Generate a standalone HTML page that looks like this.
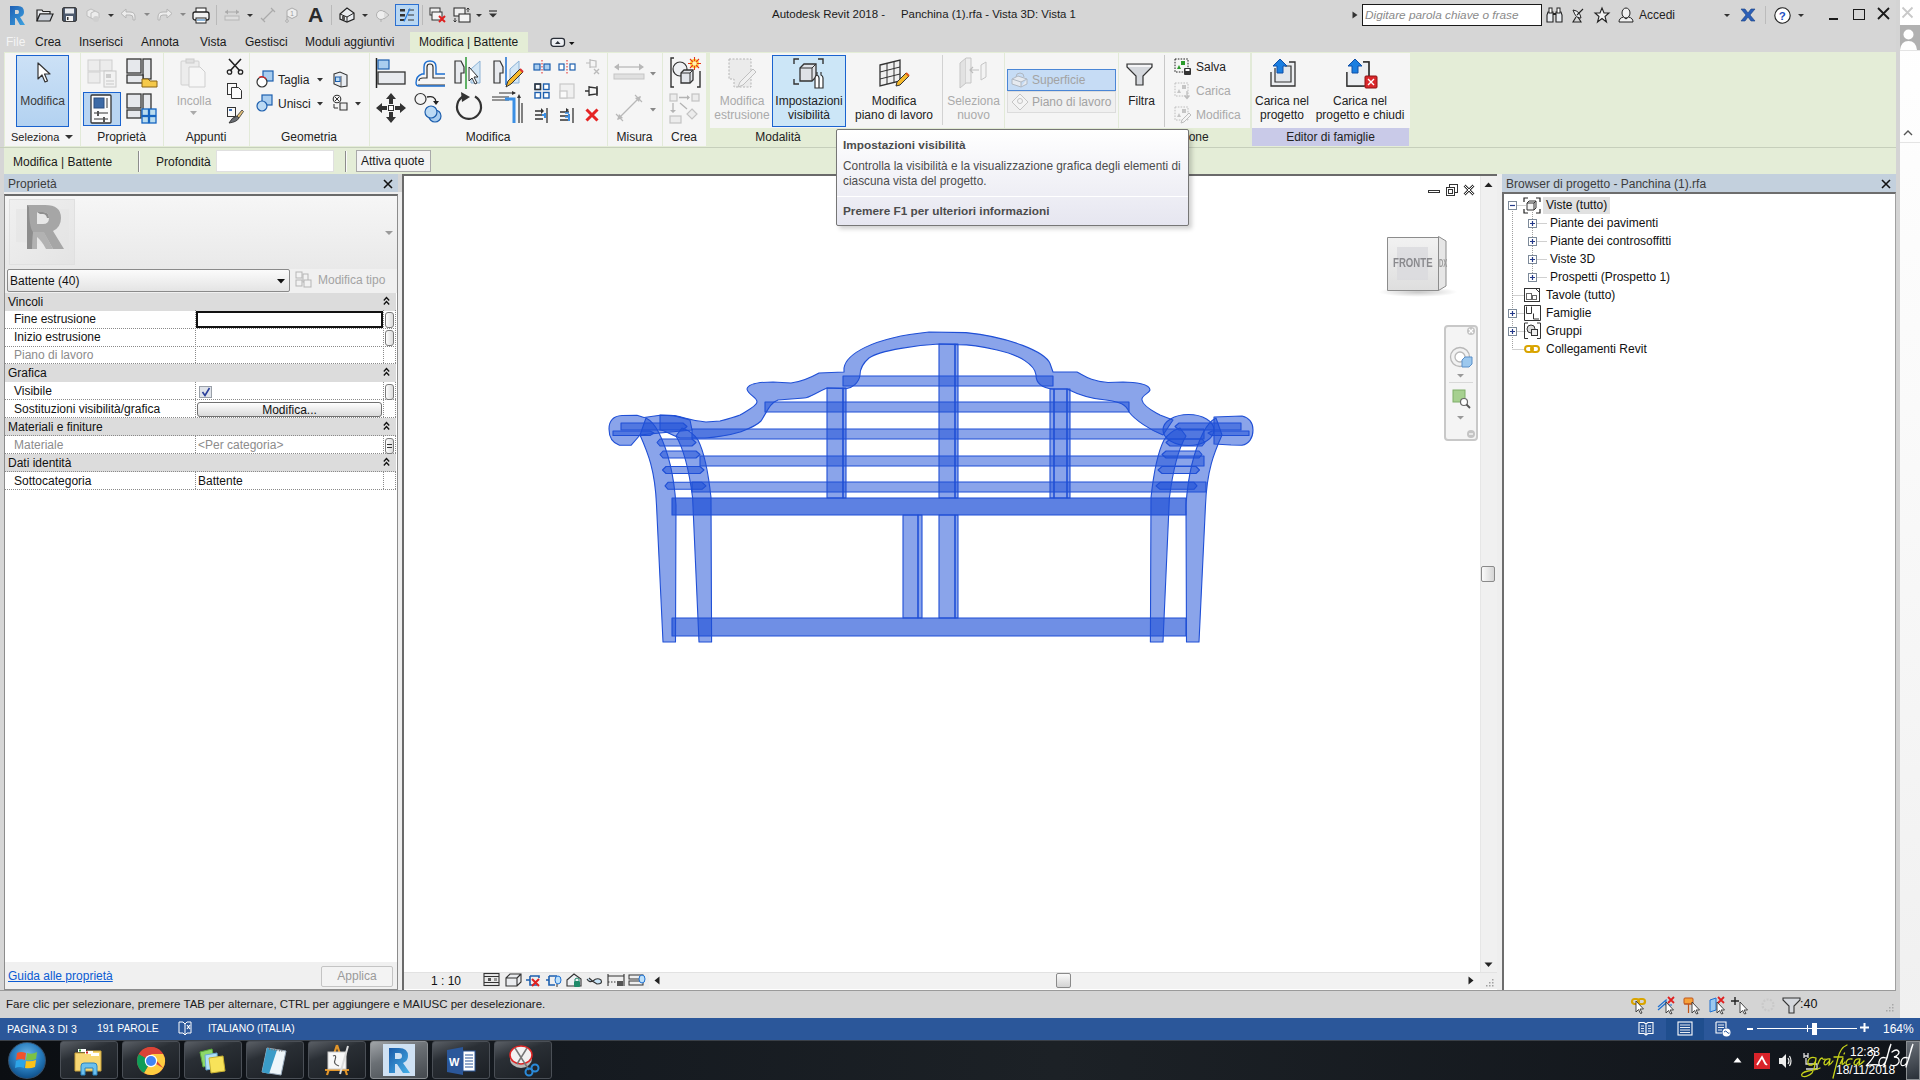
<!DOCTYPE html>
<html><head><meta charset="utf-8">
<style>
*{box-sizing:border-box}
html,body{margin:0;padding:0}
body{width:1920px;height:1080px;overflow:hidden;position:relative;font-family:"Liberation Sans",sans-serif;font-size:12px;color:#1a1a1a;background:#d6d6d6}
.a{position:absolute}
.t{position:absolute;white-space:nowrap;line-height:14px}
.g{color:#a8a8a8}
svg{position:absolute;overflow:visible}
</style></head><body>

<!-- ===== TOP BAR ===== -->
<div class="a" style="left:0;top:0;width:1896px;height:52px;background:#d6d6d6"></div>
<div class="a" style="left:1896px;top:0;width:4px;height:1080px;background:#d4d4d4"></div>
<div class="a" style="left:1900px;top:0;width:20px;height:1018px;background:linear-gradient(#ffffff,#fafafa 40%,#f0f0f0)"></div>

<div class="t" style="left:772px;top:7px;font-size:11.5px">Autodesk Revit 2018 -</div>
<div class="t" style="left:901px;top:7px;font-size:11.4px">Panchina (1).rfa - Vista 3D: Vista 1</div>

<!-- QAT -->
<svg style="left:9px;top:5px" width="18" height="21" viewBox="0 0 18 21"><defs><linearGradient id="rg" x1="0" y1="0" x2="1" y2="1"><stop offset="0" stop-color="#1e5fb4"/><stop offset="1" stop-color="#3fa3e0"/></linearGradient></defs><path d="M1 1 H9 Q15 1 15 7 Q15 11 11 12 L16 20 H11 L7 13 H6 V20 H1 Z M6 5 V9 H8.5 Q10 9 10 7 Q10 5 8.5 5 Z" fill="url(#rg)"/></svg>
<svg style="left:36px;top:8px" width="18" height="14" viewBox="0 0 18 14"><path d="M1 2 H6 L7 3.5 H14 V6 H4 L1 13 Z" fill="#e8eaee" stroke="#222" stroke-width="1.2"/><path d="M1 13 L4 6 H17 L14 13 Z" fill="#c9ced6" stroke="#222" stroke-width="1.2"/></svg>
<svg style="left:62px;top:7px" width="15" height="15" viewBox="0 0 15 15"><rect x="0.7" y="0.7" width="13.6" height="13.6" rx="1" fill="#4d5a6e" stroke="#222"/><rect x="3" y="1.5" width="9" height="5" fill="#e8eaee"/><rect x="4" y="9" width="7" height="5" fill="#f3f3f3"/><rect x="5" y="10" width="1.5" height="3" fill="#333"/></svg>
<svg style="left:85px;top:7px" width="16" height="16" viewBox="0 0 16 16"><g fill="#ececec" stroke="#bdbdbd"><path d="M2 4 L6 2 L10 4 V9 L6 11 L2 9Z"/><path d="M6 6 L10 4 L14 6 V11 L10 13 L6 11Z"/></g><circle cx="11" cy="12" r="3" fill="#cfcfcf"/></svg>
<svg style="left:108px;top:14px" width="6" height="3"><path d="M0 0 H6 L3 3Z" fill="#333"/></svg>
<svg style="left:120px;top:8px" width="16" height="13" viewBox="0 0 16 13"><path d="M6 1 L1 5.5 L6 10 V7 H10 Q13 7 13 10 V12 H15 V9 Q15 4 10 4 H6 Z" fill="#ececec" stroke="#b5b5b5"/></svg>
<svg style="left:144px;top:13px" width="6" height="3"><path d="M0 0 H6 L3 3Z" fill="#888"/></svg>
<svg style="left:157px;top:8px" width="16" height="13" viewBox="0 0 16 13"><path d="M10 1 L15 5.5 L10 10 V7 H6 Q3 7 3 10 V12 H1 V9 Q1 4 6 4 H10 Z" fill="#ececec" stroke="#b5b5b5"/></svg>
<svg style="left:180px;top:13px" width="6" height="3"><path d="M0 0 H6 L3 3Z" fill="#888"/></svg>
<svg style="left:192px;top:7px" width="18" height="17" viewBox="0 0 18 17"><rect x="4" y="1" width="10" height="5" fill="#fff" stroke="#222"/><rect x="1" y="5" width="16" height="8" rx="2" fill="#f2f2f2" stroke="#222" stroke-width="1.3"/><rect x="4" y="11" width="10" height="5" fill="#fff" stroke="#222"/><rect x="5" y="12" width="8" height="2" fill="#8fb7da"/></svg>
<div class="a" style="left:216px;top:5px;width:1px;height:20px;background:#b9b9b9"></div>
<svg style="left:224px;top:8px" width="16" height="13" viewBox="0 0 16 13"><path d="M1 4 H15" stroke="#aaa"/><path d="M1 4 L4 1.5 V6.5Z M15 4 L12 1.5 V6.5Z" fill="#aaa"/><rect x="1" y="8" width="14" height="4" fill="#ddd" stroke="#b5b5b5"/></svg>
<svg style="left:247px;top:14px" width="6" height="3"><path d="M0 0 H6 L3 3Z" fill="#333"/></svg>
<svg style="left:260px;top:7px" width="16" height="16" viewBox="0 0 16 16"><path d="M3 13 L13 3 M1 11 L5 15 M11 1 L15 5" stroke="#aaa" stroke-width="1.2"/></svg>
<svg style="left:284px;top:7px" width="15" height="15" viewBox="0 0 15 15"><path d="M8 1 L13 3.5 V9 L8 11.5 L3 9 V3.5Z" fill="#eee" stroke="#aaa"/><path d="M3 9 V14" stroke="#aaa"/><circle cx="3" cy="14" r="1.3" fill="#eee" stroke="#aaa"/><text x="6.3" y="9" font-size="6.5" fill="#999" font-family="Liberation Sans">1</text></svg>
<div class="t" style="left:308px;top:4px;font-size:21px;line-height:22px;font-weight:bold;color:#2a2a2a">A</div>
<div class="a" style="left:331px;top:5px;width:1px;height:20px;background:#b9b9b9"></div>
<svg style="left:339px;top:7px" width="16" height="16" viewBox="0 0 16 16"><path d="M1 7 L8 1 L15 6 V12 L8 15 L1 12 Z" fill="#e9ecf0" stroke="#222" stroke-width="1.2"/><path d="M1 7 L8 10 L15 6 M8 10 V15" fill="none" stroke="#222"/><rect x="3" y="9" width="3" height="4" fill="#555"/></svg>
<svg style="left:362px;top:14px" width="6" height="3"><path d="M0 0 H6 L3 3Z" fill="#333"/></svg>
<svg style="left:375px;top:8px" width="15" height="14" viewBox="0 0 15 14"><circle cx="6" cy="7" r="4.5" fill="#eee" stroke="#b0b0b0"/><path d="M9 3 L14 7 L9 11" fill="#ddd" stroke="#b0b0b0"/><path d="M6 11.5 V14" stroke="#b0b0b0"/></svg>
<div class="a" style="left:395px;top:4px;width:24px;height:22px;background:#b8d7f3;border:1px solid #2b6fd0"></div>
<svg style="left:399px;top:8px" width="16" height="14" viewBox="0 0 16 14"><rect x="1" y="1" width="5" height="2.5" fill="#333"/><rect x="1" y="6" width="5" height="2.5" fill="#333"/><rect x="1" y="11" width="5" height="2" fill="#333"/><path d="M9 2 H15 M9 7 H15 M9 12 H15" stroke="#333" stroke-width="1"/><path d="M5 13.5 L11 0.5" stroke="#2b7fe0" stroke-width="1.3"/></svg>
<div class="a" style="left:422px;top:5px;width:1px;height:20px;background:#b9b9b9"></div>
<svg style="left:429px;top:7px" width="17" height="16" viewBox="0 0 17 16"><rect x="1" y="1" width="10" height="7" fill="#f0f0f0" stroke="#333"/><rect x="3" y="5" width="10" height="8" fill="#f4f4f4" stroke="#333"/><path d="M10 9 L16 15 M16 9 L10 15" stroke="#e02020" stroke-width="2"/></svg>
<svg style="left:453px;top:7px" width="18" height="16" viewBox="0 0 18 16"><rect x="1" y="1" width="11" height="8" fill="#f0f0f0" stroke="#333" stroke-width="1.1"/><rect x="6" y="7" width="11" height="8" fill="#f4f4f4" stroke="#333" stroke-width="1.1"/><path d="M15 1 V5 M13.5 2.5 L15 1 L16.5 2.5 M2 11 V15 M0.5 13.5 L2 15 L3.5 13.5" fill="none" stroke="#333"/></svg>
<svg style="left:476px;top:14px" width="6" height="3"><path d="M0 0 H6 L3 3Z" fill="#333"/></svg>
<svg style="left:488px;top:10px" width="10" height="8" viewBox="0 0 10 8"><path d="M1 1 H9" stroke="#333" stroke-width="1.2"/><path d="M1 3.5 H9 L5 7.5Z" fill="#333"/></svg>

<!-- title right -->
<svg style="left:1352px;top:11px" width="6" height="8"><path d="M0.5 0.5 L5.5 4 L0.5 7.5Z" fill="#333"/></svg>
<div class="a" style="left:1362px;top:4px;width:180px;height:22px;background:#fff;border:1px solid #1a1a1a"></div>
<div class="t" style="left:1365px;top:8px;color:#8a8a8a;font-style:italic;font-size:11.8px">Digitare parola chiave o frase</div>
<svg style="left:1546px;top:7px" width="17" height="16" viewBox="0 0 17 16"><path d="M2 5 H7 V15 H1 V8 Z M10 5 H15 L16 8 V15 H10 Z" fill="#e9ecf0" stroke="#222" stroke-width="1.1"/><rect x="3" y="1" width="3" height="5" fill="#fff" stroke="#222"/><rect x="11" y="1" width="3" height="5" fill="#fff" stroke="#222"/><path d="M7 7 H10" stroke="#222" stroke-width="2"/></svg>
<svg style="left:1570px;top:7px" width="15" height="16" viewBox="0 0 15 16"><path d="M3 3 Q10 4 11 11 Q6 12 3 3Z" fill="#eef0f3" stroke="#222"/><path d="M7 8 L13 2 M6 10 L3 15 H11 L8 10" fill="none" stroke="#222" stroke-width="1.1"/></svg>
<svg style="left:1594px;top:7px" width="16" height="16" viewBox="0 0 16 16"><path d="M8 1 L10 6 H15 L11 9.5 L12.5 15 L8 11.5 L3.5 15 L5 9.5 L1 6 H6 Z" fill="#f2f2f2" stroke="#222" stroke-width="1.1"/></svg>
<svg style="left:1618px;top:7px" width="16" height="16" viewBox="0 0 16 16"><ellipse cx="8" cy="6" rx="4" ry="5" fill="#f2f2f2" stroke="#222"/><path d="M1 15 Q1 11 5.5 10 L8 12 L10.5 10 Q15 11 15 15 Z" fill="#f2f2f2" stroke="#222"/></svg>
<div class="t" style="left:1639px;top:8px;color:#222">Accedi</div>
<svg style="left:1724px;top:14px" width="6" height="3"><path d="M0 0 H6 L3 3Z" fill="#333"/></svg>
<svg style="left:1740px;top:8px" width="16" height="14" viewBox="0 0 16 14"><path d="M1 1 H5 L8 5 L11 1 H15 L10 7 L15 13 H11 L8 9 L5 13 H1 L6 7 Z" fill="#2c5fb8" stroke="#1a3f80" stroke-width="0.6"/></svg>
<div class="a" style="left:1765px;top:6px;width:1px;height:18px;background:#bbb"></div>
<svg style="left:1774px;top:7px" width="17" height="17" viewBox="0 0 17 17"><circle cx="8.5" cy="8.5" r="7.7" fill="#fff" stroke="#222" stroke-width="1.1"/><text x="4.8" y="13" font-size="11.5" font-weight="bold" fill="#1c4fc4" font-family="Liberation Sans">?</text></svg>
<svg style="left:1798px;top:14px" width="6" height="3"><path d="M0 0 H6 L3 3Z" fill="#333"/></svg>
<div class="a" style="left:1829px;top:18px;width:9px;height:2px;background:#1a1a1a"></div>
<div class="a" style="left:1853px;top:9px;width:12px;height:11px;border:1.5px solid #1a1a1a"></div>
<svg style="left:1877px;top:7px" width="13" height="13" viewBox="0 0 13 13"><path d="M1 1 L12 12 M12 1 L1 12" stroke="#1a1a1a" stroke-width="1.8"/></svg>
<svg style="left:1901px;top:6px" width="13" height="13" viewBox="0 0 13 13"><path d="M1.5 1.5 L11.5 11.5 M11.5 1.5 L1.5 11.5" stroke="#c9c9c9" stroke-width="1.8"/></svg>
<div class="a" style="left:1900px;top:25px;width:20px;height:25px;background:#b1b1b1"></div>
<svg style="left:1900px;top:27px" width="20" height="23" viewBox="0 0 20 23"><circle cx="8.5" cy="7.5" r="5" fill="#fff"/><path d="M0 23 Q1 14 8.5 14 Q16 14 17 23 Z" fill="#fff"/></svg>
<div class="a" style="left:1900px;top:50px;width:20px;height:1px;background:#e4e4e4"></div>
<svg style="left:1903px;top:130px" width="10" height="6"><path d="M1 5 L5 1 L9 5" fill="none" stroke="#555" stroke-width="1.4"/></svg>
<div class="a" style="left:1900px;top:142px;width:20px;height:1px;background:#e4e4e4"></div>

<!-- tabs -->
<div class="a" style="left:410px;top:32px;width:118px;height:20px;background:#e4edd6"></div>
<div class="t" style="left:6px;top:35px;color:#f4f4f4;font-size:12px">File</div>
<div class="t" style="left:35px;top:35px;font-size:12px">Crea</div>
<div class="t" style="left:79px;top:35px;font-size:12px">Inserisci</div>
<div class="t" style="left:141px;top:35px;font-size:12px">Annota</div>
<div class="t" style="left:200px;top:35px;font-size:12px">Vista</div>
<div class="t" style="left:245px;top:35px;font-size:12px">Gestisci</div>
<div class="t" style="left:305px;top:35px;font-size:12px">Moduli aggiuntivi</div>
<div class="t" style="left:419px;top:35px;font-size:12px">Modifica | Battente</div>
<svg style="left:550px;top:37px" width="26" height="11" viewBox="0 0 26 11"><rect x="1" y="1.3" width="13.5" height="8" rx="2.5" fill="#eef0f4" stroke="#2a2f38" stroke-width="1.3"/><path d="M5 7 L7.7 4 L10.5 7Z" fill="#2a2f38"/><path d="M19 5 H24.5 L21.75 8Z" fill="#111"/></svg>

<!-- ===== RIBBON ===== -->
<div class="a" style="left:4px;top:52px;width:1892px;height:96px;background:#e4edd7"></div>
<div class="a" style="left:5px;top:53px;width:701px;height:93px;background:#f5f5f5"></div>
<div class="a" style="left:710px;top:53px;width:700px;height:75px;background:#f5f5f5"></div>
<div class="a" style="left:710px;top:128px;width:540px;height:18px;background:#e4edd6"></div>
<div class="a" style="left:1252px;top:128px;width:157px;height:18px;background:#c9cae8"></div>
<div class="a" style="left:0;top:147px;width:1896px;height:1px;background:#c6cfbb"></div>
<!-- separators -->
<div class="a" style="left:80px;top:53px;width:1px;height:93px;background:#e2ead8"></div>
<div class="a" style="left:163px;top:53px;width:1px;height:93px;background:#e2ead8"></div>
<div class="a" style="left:249px;top:53px;width:1px;height:93px;background:#e2ead8"></div>
<div class="a" style="left:369px;top:53px;width:1px;height:93px;background:#e2ead8"></div>
<div class="a" style="left:607px;top:53px;width:1px;height:93px;background:#e2ead8"></div>
<div class="a" style="left:662px;top:53px;width:1px;height:93px;background:#e2ead8"></div>
<div class="a" style="left:1004px;top:53px;width:1px;height:93px;background:#e2ead8"></div>
<div class="a" style="left:1118px;top:53px;width:1px;height:93px;background:#e2ead8"></div>
<div class="a" style="left:1250px;top:53px;width:2px;height:93px;background:#e2ead8"></div>
<div class="a" style="left:942px;top:55px;width:1px;height:70px;background:#d2d2d2"></div>
<div class="a" style="left:1164px;top:55px;width:1px;height:72px;background:#c8c8c8"></div>

<!-- Seleziona panel -->
<div class="a" style="left:16px;top:55px;width:53px;height:72px;background:linear-gradient(#cce1f6,#b3d2f1);border:1px solid #1a63cf"></div>
<svg style="left:36px;top:62px" width="16" height="22" viewBox="0 0 16 22"><path d="M2 1 L2 17 L6 13 L9 20 L11.5 19 L8.5 12 L14 12 Z" fill="#fff" stroke="#333" stroke-width="1.2" stroke-linejoin="round"/></svg>
<div class="t" style="left:16px;top:94px;width:53px;text-align:center;color:#3a3a3a">Modifica</div>
<div class="t" style="left:11px;top:130px;color:#222;font-size:11px">Seleziona</div>
<svg style="left:65px;top:135px" width="8" height="5"><path d="M0 0 L8 0 L4 4 Z" fill="#333"/></svg>

<!-- Proprieta panel -->
<svg style="left:87px;top:58px" width="30" height="30" viewBox="0 0 30 30"><g fill="#ececec" stroke="#cfcfcf"><rect x="1" y="2" width="12" height="11"/><rect x="13" y="2" width="12" height="11"/><rect x="1" y="14" width="12" height="11"/></g><rect x="17" y="13" width="12" height="16" fill="#f2f2f2" stroke="#c8c8c8"/><rect x="19" y="16" width="5" height="4" fill="#ccc"/><path d="M19 23h8M19 26h8" stroke="#c8c8c8"/></svg>
<svg style="left:126px;top:57px" width="32" height="31" viewBox="0 0 32 31"><g fill="#e6e8ec" stroke="#333" stroke-width="1.3"><rect x="1" y="2" width="14" height="14"/><rect x="17" y="2" width="8" height="20"/><rect x="1" y="18" width="16" height="8"/></g><path d="M16 22 h6 l2 2 h7 v6 h-15 z" fill="#f5c94a" stroke="#8a6414"/></svg>
<div class="a" style="left:83px;top:92px;width:38px;height:34px;background:#b9d5f2;border:1px solid #1a63cf"></div>
<svg style="left:90px;top:94px" width="22" height="30" viewBox="0 0 22 30"><rect x="1" y="1" width="20" height="28" rx="1" fill="#fbfbfb" stroke="#333" stroke-width="1.3"/><rect x="4" y="4" width="10" height="10" fill="#3c6aa6" stroke="#2a4f80"/><rect x="16" y="4" width="2" height="10" fill="#999"/><path d="M4 19h14M4 25h14" stroke="#333" stroke-width="1.2"/><rect x="7" y="17" width="2" height="5" fill="#555"/><rect x="13" y="23" width="2" height="5" fill="#555"/></svg>
<svg style="left:126px;top:93px" width="32" height="31" viewBox="0 0 32 31"><g fill="#e6e8ec" stroke="#333" stroke-width="1.3"><rect x="1" y="1" width="14" height="14"/><rect x="17" y="1" width="8" height="16"/><rect x="1" y="17" width="14" height="8"/></g><g fill="#b9dcef" stroke="#1565c0" stroke-width="1.3"><rect x="16" y="16" width="6.5" height="6.5"/><rect x="23.5" y="16" width="6.5" height="6.5"/><rect x="16" y="23.5" width="6.5" height="6.5"/><rect x="23.5" y="23.5" width="6.5" height="6.5"/></g></svg>
<div class="t" style="left:80px;top:130px;width:83px;text-align:center;color:#222">Proprietà</div>

<!-- Appunti panel -->
<svg style="left:180px;top:58px" width="28" height="30" viewBox="0 0 28 30"><rect x="1" y="3" width="18" height="24" rx="1" fill="#ececec" stroke="#d0d0d0"/><rect x="6" y="1" width="8" height="4" fill="#e0e0e0" stroke="#ccc"/><path d="M9 9 h11 l5 5 v15 h-16 z" fill="#f6f6f6" stroke="#cfcfcf"/></svg>
<div class="t" style="left:163px;top:94px;width:62px;text-align:center;color:#aaa">Incolla</div>
<svg style="left:190px;top:111px" width="7" height="4"><path d="M0 0 L7 0 L3.5 4 Z" fill="#aaa"/></svg>
<svg style="left:226px;top:58px" width="18" height="17" viewBox="0 0 18 17"><path d="M3 1 L14 13 M15 1 L4 13" stroke="#222" stroke-width="1.6"/><circle cx="3.5" cy="14" r="2.2" fill="none" stroke="#222" stroke-width="1.3"/><circle cx="14.5" cy="14" r="2.2" fill="none" stroke="#222" stroke-width="1.3"/></svg>
<svg style="left:226px;top:82px" width="18" height="18" viewBox="0 0 18 18"><rect x="1.5" y="1.5" width="9" height="11" fill="#fafafa" stroke="#333"/><path d="M5.5 5.5 h7 l3 3 v8 h-10 z" fill="#fafafa" stroke="#333"/></svg>
<svg style="left:226px;top:106px" width="18" height="18" viewBox="0 0 18 18"><rect x="1.5" y="1.5" width="8" height="9" fill="#fafafa" stroke="#333"/><rect x="3" y="3" width="3" height="2" fill="#3b6fb6"/><path d="M3 17 Q6 11 11 10 L13 12 Q11 16 3 17Z" fill="#6a6e74" stroke="#333" stroke-width="0.9"/><path d="M11 10 L16 4 L17.5 5.5 L13 12Z" fill="#e6c27a" stroke="#333" stroke-width="0.8"/></svg>
<div class="t" style="left:163px;top:130px;width:86px;text-align:center;color:#222">Appunti</div>

<!-- Geometria panel -->
<svg style="left:256px;top:70px" width="18" height="18" viewBox="0 0 18 18"><rect x="7" y="1" width="10" height="10" fill="#a9cdef" stroke="#1d5fae" stroke-width="1.2"/><circle cx="6" cy="12" r="5" fill="#fff" stroke="#333" stroke-width="1.2"/><path d="M3 7.5 A5 5 0 0 1 10 9" stroke="#e02020" stroke-width="1.2" fill="none"/></svg>
<div class="t" style="left:278px;top:73px;color:#222">Taglia</div>
<svg style="left:317px;top:78px" width="6" height="4"><path d="M0 0 L6 0 L3 3.5 Z" fill="#333"/></svg>
<svg style="left:256px;top:94px" width="18" height="18" viewBox="0 0 18 18"><rect x="6" y="1" width="10" height="10" fill="#a9cdef" stroke="#1d5fae" stroke-width="1.2"/><circle cx="6" cy="12" r="5" fill="#bcdaf4" stroke="#1d5fae" stroke-width="1.2"/></svg>
<div class="t" style="left:278px;top:97px;color:#222">Unisci</div>
<svg style="left:317px;top:102px" width="6" height="4"><path d="M0 0 L6 0 L3 3.5 Z" fill="#333"/></svg>
<svg style="left:332px;top:71px" width="17" height="17" viewBox="0 0 17 17"><path d="M2 3 L8 1 L15 4 L15 15 L9 16 L2 13 Z" fill="#e9edf2" stroke="#333" stroke-width="1.1"/><path d="M9 5 V16" stroke="#333" stroke-width="0.8"/><rect x="3.5" y="6" width="4.5" height="4.5" fill="#bcdcf5" stroke="#1d5fae"/></svg>
<svg style="left:332px;top:94px" width="17" height="17" viewBox="0 0 17 17"><circle cx="5" cy="5" r="3.8" fill="none" stroke="#333" stroke-width="1.1"/><path d="M3 3l4 4M7 3l-4 4" stroke="#333"/><path d="M8 9 h7 v7 h-7 z" fill="#eee" stroke="#333" stroke-width="1.1"/><path d="M2 10 v4 h4" fill="none" stroke="#333"/></svg>
<svg style="left:355px;top:102px" width="6" height="4"><path d="M0 0 L6 0 L3 3.5 Z" fill="#333"/></svg>
<div class="t" style="left:249px;top:130px;width:120px;text-align:center;color:#222">Geometria</div>

<!-- Modifica panel -->
<svg style="left:375px;top:57px" width="32" height="32" viewBox="0 0 32 32"><path d="M1.5 1 V31" stroke="#222" stroke-width="1.5"/><rect x="3" y="3" width="11" height="9" fill="#a9cdef" stroke="#1d5fae" stroke-width="1.2"/><rect x="3" y="15" width="27" height="12" fill="#e8eaee" stroke="#333" stroke-width="1.3"/></svg>
<svg style="left:414px;top:59px" width="32" height="28" viewBox="0 0 32 28"><path d="M2 24 Q2 17 8 15 L10 15 L10 8 Q10 2 16 2 Q22 2 22 8 L22 15 L31 15" fill="none" stroke="#1d6fd0" stroke-width="1.4"/><path d="M4 26 L31 26 M5 22 Q5 19 9 19 L13 19 L13 8 Q13 5 16 5 Q19 5 19 8 L19 19 L31 19" fill="none" stroke="#333" stroke-width="1.2"/><path d="M2 24 Q2 27 5 27 L31 27" fill="none" stroke="#1d6fd0" stroke-width="1.3"/></svg>
<svg style="left:453px;top:57px" width="34" height="34" viewBox="0 0 34 34"><path d="M2 4 L8 4 L11 10 L11 16 L8 16 L8 26 L2 26 Z" fill="#e8eaee" stroke="#333" stroke-width="1.2"/><path d="M18 12 L27 4 L27 26 L18 26 Z" fill="#d3e6f5" stroke="#8bb2d6" stroke-width="1"/><path d="M13 0 V32" stroke="#2c9a35" stroke-width="1.5"/><path d="M16 10 L16 24 L19 21 L22 27 L24 26 L21 20 L25 20 Z" fill="#fff" stroke="#333"/></svg>
<svg style="left:492px;top:57px" width="32" height="32" viewBox="0 0 32 32"><path d="M2 4 L8 4 L11 10 L11 16 L8 16 L8 26 L2 26 Z" fill="#e8eaee" stroke="#333" stroke-width="1.2"/><path d="M18 12 L27 4 L27 26 L18 26 Z" fill="#d3e6f5" stroke="#8bb2d6" stroke-width="1"/><path d="M14 0 V28" stroke="#1d6fd0" stroke-width="1.5"/><path d="M14 30 L16 24 L28 12 L31 15 L19 27 Z" fill="#f5b92c" stroke="#333" stroke-width="1"/><path d="M28 12 L31 15" stroke="#d33" stroke-width="2"/></svg>
<svg style="left:375px;top:92px" width="32" height="32" viewBox="0 0 32 32"><path d="M16 1 L21 7 L18 7 L18 12 L14 12 L14 7 L11 7 Z M16 31 L21 25 L18 25 L18 20 L14 20 L14 25 L11 25 Z M1 16 L7 11 L7 14 L12 14 L12 18 L7 18 L7 21 Z M31 16 L25 11 L25 14 L20 14 L20 18 L25 18 L25 21 Z" fill="#333"/><rect x="13.5" y="13.5" width="5" height="5" fill="#fff" stroke="#333"/></svg>
<svg style="left:414px;top:92px" width="30" height="32" viewBox="0 0 30 32"><circle cx="6.5" cy="7" r="5.5" fill="#f3f3f3" stroke="#333" stroke-width="1.2"/><path d="M13 5 Q21 3 22 10" fill="none" stroke="#222" stroke-width="1.3"/><path d="M19 9 L22 13 L25 9 Z" fill="#222"/><circle cx="21" cy="24" r="6" fill="#a9cdef" stroke="#1d5fae" stroke-width="1.2"/><circle cx="17" cy="20" r="6" fill="#bcdaf4" stroke="#1d5fae" stroke-width="1.2"/></svg>
<svg style="left:453px;top:92px" width="32" height="32" viewBox="0 0 32 32"><path d="M11 4 A12 12 0 1 0 22 4.5" fill="none" stroke="#333" stroke-width="2.2"/><path d="M8 0 L17 5 L9 10 Z" fill="#333"/></svg>
<svg style="left:491px;top:91px" width="34" height="34" viewBox="0 0 34 34"><path d="M1 6 H18 M1 9 H18" stroke="#333" stroke-width="1.2"/><path d="M8 2 H24 M28 6 V32 M31 12 V32" stroke="#333" stroke-width="1.2"/><path d="M21 0 L25 2 L21 4Z M28 3 L26 7 L30 7Z" fill="#333"/><path d="M14 8 H23 V32" fill="none" stroke="#3b8fe4" stroke-width="3"/></svg>
<svg style="left:533px;top:60px" width="18" height="14" viewBox="0 0 18 14"><rect x="1" y="4" width="6" height="6" fill="#a9cdef" stroke="#1d5fae" stroke-width="1.2"/><rect x="11" y="4" width="6" height="6" fill="#a9cdef" stroke="#1d5fae" stroke-width="1.2"/><path d="M9 0 V14" stroke="#e02020" stroke-dasharray="1.5 1.5"/></svg>
<svg style="left:558px;top:60px" width="18" height="14" viewBox="0 0 18 14"><rect x="1" y="4" width="5" height="6" fill="#fff" stroke="#1d5fae" stroke-width="1.2"/><rect x="12" y="4" width="5" height="6" fill="#fff" stroke="#1d5fae" stroke-width="1.2"/><path d="M9 0 V14" stroke="#e02020" stroke-dasharray="1.5 1.5"/></svg>
<svg style="left:584px;top:58px" width="17" height="17" viewBox="0 0 17 17"><path d="M2 5 H6 M6 1 V10 M6 2 L12 3 V9 L6 9" fill="none" stroke="#bbb" stroke-width="1.2"/><path d="M10 11 l5 5 M15 11 l-5 5" stroke="#bbb" stroke-width="1.4"/></svg>
<svg style="left:534px;top:83px" width="16" height="16" viewBox="0 0 16 16"><g fill="#fff" stroke="#1d5fae" stroke-width="1.4"><rect x="1" y="1" width="5.5" height="5.5"/><rect x="9.5" y="1" width="5.5" height="5.5"/><rect x="1" y="9.5" width="5.5" height="5.5"/><rect x="9.5" y="9.5" width="5.5" height="5.5"/></g><rect x="1" y="1" width="5.5" height="5.5" fill="none" stroke="#333" stroke-width="1.4"/></svg>
<svg style="left:559px;top:83px" width="16" height="16" viewBox="0 0 16 16"><rect x="1" y="1" width="14" height="14" fill="#f0f0f0" stroke="#c8c8c8" stroke-width="1.2"/><rect x="1" y="8" width="7" height="7" fill="#fafafa" stroke="#c8c8c8" stroke-width="1.2"/></svg>
<svg style="left:584px;top:83px" width="16" height="16" viewBox="0 0 16 16"><path d="M1 8 H5 M5 3 V13 M5 4 L13 5 V11 L5 12" fill="none" stroke="#333" stroke-width="1.3"/><path d="M13 3 V13" stroke="#333" stroke-width="1.3"/></svg>
<svg style="left:534px;top:107px" width="16" height="16" viewBox="0 0 16 16"><path d="M1 4 H9 M1 8 H10 M1 12 H9 M13 1 V16" stroke="#333" stroke-width="1.3"/><path d="M7 1 L10 4 L7 7" fill="#333"/><path d="M8 8 H11 M11 6 V11" stroke="#3b8fe4" stroke-width="2"/></svg>
<svg style="left:559px;top:107px" width="16" height="16" viewBox="0 0 16 16"><path d="M1 5 H10 M1 9 H10 M1 13 H10 M14 1 V16" stroke="#333" stroke-width="1.3"/><path d="M7 1 L10 3 L7 5" fill="#333"/><path d="M10 7 V14" stroke="#3b8fe4" stroke-width="2"/><path d="M6 6 H10 M6 10 H10" stroke="#3b8fe4" stroke-width="1.5"/></svg>
<svg style="left:584px;top:107px" width="16" height="16" viewBox="0 0 16 16"><path d="M2.5 2.5 L13.5 13.5 M13.5 2.5 L2.5 13.5" stroke="#e52424" stroke-width="3"/></svg>
<div class="t" style="left:369px;top:130px;width:238px;text-align:center;color:#222">Modifica</div>

<!-- Misura -->
<svg style="left:613px;top:61px" width="32" height="20" viewBox="0 0 32 20"><path d="M2 6 H30" stroke="#b8b8b8" stroke-width="1.3"/><path d="M1 6 L6 2.5 V9.5Z M31 6 L26 2.5 V9.5Z" fill="#b8b8b8"/><rect x="1" y="13" width="30" height="5" fill="#e0e0e0" stroke="#c5c5c5"/></svg>
<svg style="left:650px;top:72px" width="6" height="4"><path d="M0 0 L6 0 L3 3.5 Z" fill="#888"/></svg>
<svg style="left:613px;top:92px" width="32" height="32" viewBox="0 0 32 32"><path d="M5 27 L27 5" stroke="#b8b8b8" stroke-width="1.3"/><path d="M3 22 L10 29 M22 3 L29 10" stroke="#b8b8b8" stroke-width="1.2"/><path d="M4 28 L6 22 L10 26Z M28 4 L22 6 L26 10Z" fill="#b8b8b8"/></svg>
<svg style="left:650px;top:108px" width="6" height="4"><path d="M0 0 L6 0 L3 3.5 Z" fill="#888"/></svg>
<div class="t" style="left:607px;top:130px;width:55px;text-align:center;color:#222">Misura</div>

<!-- Crea -->
<svg style="left:669px;top:57px" width="33" height="31" viewBox="0 0 33 31"><path d="M5 1 H2 V30 H5 M28 30 H31 V14" fill="none" stroke="#333" stroke-width="1.4"/><circle cx="11" cy="12" r="7" fill="#eef0f3" stroke="#333" stroke-width="1.2"/><path d="M12 16 L15 13 H24 V23 L21 26 H12 Z" fill="#e2e5ea" stroke="#333" stroke-width="1.3"/><path d="M12 16 H21 V26 M21 16 L24 13" fill="none" stroke="#333" stroke-width="1"/><circle cx="25.5" cy="6.5" r="4.5" fill="#ffd22a"/><path d="M25.5 0 V13 M19 6.5 H32 M21 2 L30 11 M30 2 L21 11" stroke="#e8391a" stroke-width="1.1"/><circle cx="25.5" cy="6.5" r="2.2" fill="#fff6b0"/></svg>
<svg style="left:668px;top:93px" width="32" height="32" viewBox="0 0 32 32"><g fill="#ececec" stroke="#c3c3c3" stroke-width="1.2"><rect x="2" y="1" width="7" height="7"/><rect x="24" y="1" width="7" height="7"/><rect x="2" y="23" width="11" height="7"/><path d="M24 16 L29 21 L24 26 L19 21Z"/></g><path d="M11 4.5 H21 M5 10 V19 M12 10 L19 16" stroke="#b4b4b4" stroke-width="1.3"/><path d="M19 2 L22 4.5 L19 7Z M2 17 L5 20 L8 17Z" fill="#b4b4b4"/></svg>
<div class="t" style="left:662px;top:130px;width:44px;text-align:center;color:#222">Crea</div>

<!-- Modalita -->
<svg style="left:727px;top:57px" width="30" height="32" viewBox="0 0 30 32"><path d="M2 2 H24 V30 H7 V22 H2 Z" fill="#ebebeb" stroke="#b5b5b5" stroke-dasharray="2 1.5"/><path d="M11 30 L13 25 L26 12 L29 15 L16 28 Z" fill="#f0f0f0" stroke="#c0c0c0"/></svg>
<div class="t" style="left:712px;top:94px;width:60px;text-align:center;color:#aaa">Modifica</div>
<div class="t" style="left:712px;top:108px;width:60px;text-align:center;color:#aaa">estrusione</div>
<div class="a" style="left:772px;top:55px;width:74px;height:72px;background:#cce6f7;border:1px solid #1a63cf"></div>
<svg style="left:793px;top:58px" width="34" height="32" viewBox="0 0 34 32"><path d="M1 6 V1 H6 M25 1 H30 V6 M1 21 V26 H6" fill="none" stroke="#333" stroke-width="1.4"/><path d="M7 10 L11 6 H23 V19 L19 23 H7 Z" fill="#dfe2e7" stroke="#333" stroke-width="1.3"/><path d="M7 10 H19 V23 M19 10 L23 6" fill="none" stroke="#333"/><path d="M24 14 v3 q-2 1 -2 3 v10 h4 v-10 q0 -2 -2 -3 M28 14 v3 q2 1 2 3 v10 h-4" fill="#fff" stroke="#333" stroke-width="1.2"/></svg>
<div class="t" style="left:772px;top:94px;width:74px;text-align:center;color:#222">Impostazioni</div>
<div class="t" style="left:772px;top:108px;width:74px;text-align:center;color:#222">visibilità</div>
<svg style="left:878px;top:59px" width="32" height="30" viewBox="0 0 32 30"><path d="M2 6 L22 1 L22 22 L2 27 Z" fill="#f0f0f0" stroke="#333" stroke-width="1.3"/><path d="M2 13 L22 8 M2 20 L22 15 M9 4.5 V25 M16 3 V23.5" stroke="#333" stroke-width="1"/><path d="M18 27 L19 23 L28 14 L31 17 L22 26 Z" fill="#f5b92c" stroke="#333"/><path d="M28 14 L31 17" stroke="#e05a1a" stroke-width="2"/></svg>
<div class="t" style="left:846px;top:94px;width:96px;text-align:center;color:#222">Modifica</div>
<div class="t" style="left:846px;top:108px;width:96px;text-align:center;color:#222">piano di lavoro</div>
<svg style="left:958px;top:57px" width="32" height="32" viewBox="0 0 32 32"><path d="M2 6 L8 1 V26 L2 31 Z" fill="#e2e2e2" stroke="#c5c5c5"/><path d="M8 1 H13 V26 H8" fill="#ededed" stroke="#c5c5c5"/><path d="M23 8 L28 5 V20 L23 23 Z" fill="#f3f3f3" stroke="#c5c5c5"/><path d="M21 13 H12 M15 10 L12 13 L15 16" fill="none" stroke="#bdbdbd" stroke-width="1.2"/></svg>
<div class="t" style="left:943px;top:94px;width:61px;text-align:center;color:#aaa">Seleziona</div>
<div class="t" style="left:943px;top:108px;width:61px;text-align:center;color:#aaa">nuovo</div>
<div class="t" style="left:710px;top:130px;width:136px;text-align:center;color:#222">Modalità</div>

<!-- Superficie / Piano -->
<div class="a" style="left:1007px;top:69px;width:109px;height:22px;background:#c6dcf5;border:1px solid #4a86d6"></div>
<svg style="left:1011px;top:72px" width="18" height="16" viewBox="0 0 18 16"><path d="M1 7 L7 4 L16 7 L10 10 Z M1 7 V12 L10 15 V10 M10 15 L16 12 V7" fill="#e6eaf0" stroke="#b0b8c2"/><path d="M5 5 Q5 1 9 1 Q13 1 13 5" fill="none" stroke="#b0b8c2"/></svg>
<div class="t" style="left:1032px;top:73px;color:#a3a3a3">Superficie</div>
<div class="a" style="left:1007px;top:91px;width:109px;height:22px;background:#f0f0f0;border:1px solid #dcdcdc"></div>
<svg style="left:1011px;top:93px" width="18" height="18" viewBox="0 0 18 18"><path d="M9 1 L17 9 L9 17 L1 9 Z" fill="#f4f4f4" stroke="#c5c5c5"/><circle cx="9" cy="8" r="2.5" fill="none" stroke="#c5c5c5"/></svg>
<div class="t" style="left:1032px;top:95px;color:#a3a3a3">Piano di lavoro</div>

<!-- Filtra + Salva -->
<svg style="left:1126px;top:62px" width="28" height="25" viewBox="0 0 28 25"><path d="M1 2 H26 V5 L17 14 V23 H10 V14 L1 5 Z" fill="#d5d8dd" stroke="#333" stroke-width="1.2"/><path d="M2 4 H25" stroke="#fff" stroke-width="1.5"/></svg>
<div class="t" style="left:1119px;top:94px;width:45px;text-align:center;color:#222">Filtra</div>
<svg style="left:1174px;top:58px" width="18" height="18" viewBox="0 0 18 18"><rect x="1" y="1" width="13" height="13" fill="none" stroke="#222" stroke-dasharray="1.6 1.2"/><path d="M3 11 L5 7 L7 11 Z" fill="#2a9a2a"/><rect x="7" y="3" width="4" height="4" fill="#2a9a2a"/><rect x="10" y="10" width="7" height="7" rx="1" fill="#333"/><rect x="11.5" y="11" width="4" height="2" fill="#fff"/></svg>
<div class="t" style="left:1196px;top:60px;color:#222">Salva</div>
<svg style="left:1174px;top:82px" width="18" height="18" viewBox="0 0 18 18"><rect x="1" y="1" width="13" height="13" fill="none" stroke="#bdbdbd" stroke-dasharray="1.6 1.2"/><path d="M3 11 L5 7 L7 11 Z" fill="#c5c5c5"/><rect x="8" y="3" width="4" height="4" fill="#c5c5c5"/><path d="M13 9 V16 M10.5 13.5 L13 16.5 L15.5 13.5" stroke="#bdbdbd" fill="none" stroke-width="1.3"/></svg>
<div class="t" style="left:1196px;top:84px;color:#aaa">Carica</div>
<svg style="left:1174px;top:106px" width="18" height="18" viewBox="0 0 18 18"><rect x="1" y="1" width="13" height="13" fill="none" stroke="#bdbdbd" stroke-dasharray="1.6 1.2"/><path d="M3 11 L5 7 L7 11 Z" fill="#c5c5c5"/><rect x="8" y="3" width="4" height="4" fill="#c5c5c5"/><path d="M7 17 L8 14 L15 7 L17 9 L10 16 Z" fill="#f4f4f4" stroke="#bdbdbd"/></svg>
<div class="t" style="left:1196px;top:108px;color:#aaa">Modifica</div>
<div class="t" style="left:1180px;top:130px;color:#222">zione</div>

<!-- Editor di famiglie -->
<svg style="left:1268px;top:58px" width="30" height="30" viewBox="0 0 30 30"><path d="M3 14 V28 H27 V4 H21" fill="#eceef1" stroke="#333" stroke-width="1.3"/><path d="M7 10 V24 H23 V8 H17" fill="#e4e7eb" stroke="#333" stroke-width="1.2"/><path d="M12 1 L19 8 H15 V15 H9 V8 H5 Z" fill="#1a7ee0" stroke="#0d4fa8"/></svg>
<div class="t" style="left:1252px;top:94px;width:60px;text-align:center;color:#222">Carica nel</div>
<div class="t" style="left:1252px;top:108px;width:60px;text-align:center;color:#222">progetto</div>
<svg style="left:1344px;top:58px" width="34" height="32" viewBox="0 0 34 32"><path d="M3 14 V28 H20 M25 20 V4 H19" fill="none" stroke="#333" stroke-width="1.3"/><path d="M3 14 V28 H24 V4 H19" fill="#eceef1" stroke="none"/><path d="M3 14 V28 H22 M25 20 V4 H19" fill="none" stroke="#333" stroke-width="1.3"/><path d="M11 1 L18 8 H14 V15 H8 V8 H4 Z" fill="#1a7ee0" stroke="#0d4fa8"/><rect x="21" y="18" width="12" height="12" rx="1" fill="#d9262a" stroke="#8e1212"/><path d="M24 21 L30 27 M30 21 L24 27" stroke="#fff" stroke-width="1.4"/></svg>
<div class="t" style="left:1312px;top:94px;width:96px;text-align:center;color:#222">Carica nel</div>
<div class="t" style="left:1312px;top:108px;width:96px;text-align:center;color:#222">progetto e chiudi</div>
<div class="t" style="left:1252px;top:130px;width:157px;text-align:center;color:#222">Editor di famiglie</div>

<!-- ===== OPTIONS BAR ===== -->
<div class="a" style="left:4px;top:148px;width:1892px;height:26px;background:#e4edd7"></div>
<div class="t" style="left:13px;top:155px;font-size:12px">Modifica | Battente</div>
<div class="a" style="left:138px;top:151px;width:1px;height:21px;background:#8c8c8c;border-right:1px solid #fafafa;box-sizing:content-box"></div>
<div class="a" style="left:345px;top:151px;width:1px;height:21px;background:#8c8c8c;border-right:1px solid #fafafa;box-sizing:content-box"></div>
<div class="t" style="left:156px;top:155px;font-size:12px">Profondità</div>
<div class="a" style="left:216px;top:150px;width:118px;height:22px;background:#fff;border:1px solid #e0e0e0"></div>
<div class="a" style="left:356px;top:150px;width:75px;height:22px;background:#f4f4f4;border:1px solid #a9a9a9"></div>
<div class="t" style="left:361px;top:154px;font-size:12px">Attiva quote</div>

<!-- ===== PROPERTIES PANEL ===== -->
<div class="a" style="left:4px;top:174px;width:394px;height:18px;background:#c3d0dd"></div>
<div class="t" style="left:8px;top:177px;color:#3c3c3c">Proprietà</div>
<svg style="left:383px;top:179px" width="10" height="10" viewBox="0 0 10 10"><path d="M1 1 L9 9 M9 1 L1 9" stroke="#111" stroke-width="1.6"/></svg>
<div class="a" style="left:0;top:174px;width:4px;height:816px;background:#d6d6d6"></div>
<div class="a" style="left:4px;top:192px;width:398px;height:798px;background:#eeeeee"></div>
<div class="a" style="left:4px;top:194px;width:394px;height:796px;background:#f0f0f0;border:1px solid #8c8c8c;border-top:2px solid #6a6a6a"></div>
<div class="a" style="left:5px;top:196px;width:392px;height:73px;background:linear-gradient(#f6f6f6,#e9e9e9)"></div>
<div class="a" style="left:9px;top:199px;width:66px;height:66px;background:linear-gradient(135deg,#f0f0f0,#e4e4e4);border:1px solid #e0e0e0"></div>
<svg style="left:9px;top:199px" width="66" height="66" viewBox="0 0 66 66"><path d="M7 10 H60 V51 Q40 44 7 43 Z" fill="#e4e4e4" opacity="0.6"/><path d="M18 6 H36 Q52 6 52 19 Q52 28 44 32 L55 50 H44 L35 34 H28 V50 H18 Z M28 13 V25 H34 Q40 25 40 19 Q40 13 34 13 Z" fill="#a6a6a6" fill-rule="evenodd"/><path d="M18 6 L20 8 Q20 28 24 33 L23 50 H18 Z" fill="#8d8d8d"/><path d="M28 13 L31 15 H34 Q37 15 38 19 L40 19 Q40 13 34 13 Z" fill="#8f8f8f"/><path d="M24 33 H35 L44 50 H37 Q33 42 28 38 V50 H23 Z" fill="#b2b2b2"/></svg>
<svg style="left:385px;top:231px" width="8" height="5"><path d="M0 0 H8 L4 4Z" fill="#9a9a9a"/></svg>
<div class="a" style="left:7px;top:269px;width:283px;height:23px;background:linear-gradient(#fbfbfb,#e4e4e4);border:1px solid #8a8a8a;border-radius:2px"></div>
<div class="t" style="left:10px;top:274px;color:#111">Battente (40)</div>
<svg style="left:277px;top:279px" width="8" height="5"><path d="M0 0 H8 L4 4.5Z" fill="#111"/></svg>
<svg style="left:295px;top:271px" width="17" height="17" viewBox="0 0 17 17"><g fill="#f2f2f2" stroke="#b5b5b5"><rect x="1" y="1" width="6" height="6"/><rect x="1" y="9" width="6" height="6"/><rect x="8" y="3" width="5" height="8"/><rect x="9" y="9" width="7" height="7"/></g></svg>
<div class="t" style="left:318px;top:273px;color:#a3a3a3">Modifica tipo</div>
<div class="a" style="left:5px;top:293px;width:392px;height:669px;background:#fff"></div>
<!-- property grid -->
<div class="a" style="left:5px;top:293px;width:391px;height:18px;background:#dcdcdc"></div>
<div class="a" style="left:5px;top:364px;width:391px;height:18px;background:#dcdcdc"></div>
<div class="a" style="left:5px;top:418px;width:391px;height:18px;background:#dcdcdc"></div>
<div class="a" style="left:5px;top:454px;width:391px;height:18px;background:#dcdcdc"></div>
<div class="t" style="left:8px;top:295px;color:#111">Vincoli</div>
<div class="t" style="left:8px;top:366px;color:#111">Grafica</div>
<div class="t" style="left:8px;top:420px;color:#111">Materiali e finiture</div>
<div class="t" style="left:8px;top:456px;color:#111">Dati identità</div>
<svg style="left:383px;top:296px" width="7" height="10" viewBox="0 0 7 10"><path d="M0.8 4.5 L3.5 1.5 L6.2 4.5 M0.8 8.5 L3.5 5.5 L6.2 8.5" fill="none" stroke="#111" stroke-width="1.3"/></svg>
<svg style="left:383px;top:367px" width="7" height="10" viewBox="0 0 7 10"><path d="M0.8 4.5 L3.5 1.5 L6.2 4.5 M0.8 8.5 L3.5 5.5 L6.2 8.5" fill="none" stroke="#111" stroke-width="1.3"/></svg>
<svg style="left:383px;top:421px" width="7" height="10" viewBox="0 0 7 10"><path d="M0.8 4.5 L3.5 1.5 L6.2 4.5 M0.8 8.5 L3.5 5.5 L6.2 8.5" fill="none" stroke="#111" stroke-width="1.3"/></svg>
<svg style="left:383px;top:457px" width="7" height="10" viewBox="0 0 7 10"><path d="M0.8 4.5 L3.5 1.5 L6.2 4.5 M0.8 8.5 L3.5 5.5 L6.2 8.5" fill="none" stroke="#111" stroke-width="1.3"/></svg>
<svg style="left:5px;top:310px" width="392" height="182"><g stroke="#8a8a8a" stroke-dasharray="1 1" stroke-width="1"><path d="M0 18.5 H391 M0 36.5 H391 M0 53.5 H391 M0 107.5 H391 M0 143.5 H391 M0 179.5 H391 M0 89.5 H391 M0 125.5 H391 M0 161.5 H391"/><path d="M190.5 0 V54 M378.5 0 V54 M390.5 0 V54 M190.5 72 V108 M378.5 72 V108 M390.5 72 V108 M190.5 126 V144 M378.5 126 V144 M390.5 126 V144 M190.5 162 V180 M378.5 162 V180 M390.5 162 V180"/></g></svg>
<div class="t" style="left:14px;top:312px;color:#111">Fine estrusione</div>
<div class="t" style="left:14px;top:330px;color:#111">Inizio estrusione</div>
<div class="t" style="left:14px;top:348px;color:#8c8c8c">Piano di lavoro</div>
<div class="t" style="left:14px;top:384px;color:#111">Visibile</div>
<div class="t" style="left:14px;top:402px;color:#111">Sostituzioni visibilità/grafica</div>
<div class="t" style="left:14px;top:438px;color:#8c8c8c">Materiale</div>
<div class="t" style="left:14px;top:474px;color:#111">Sottocategoria</div>
<div class="a" style="left:196px;top:311px;width:187px;height:17px;background:#fff;border:2px solid #111"></div>
<div class="a" style="left:385px;top:312px;width:9px;height:16px;background:linear-gradient(90deg,#fdfdfd,#dcdcdc);border:1px solid #7a7a7a;border-radius:3px"></div>
<div class="a" style="left:385px;top:330px;width:9px;height:16px;background:linear-gradient(90deg,#fdfdfd,#dcdcdc);border:1px solid #7a7a7a;border-radius:3px"></div>
<div class="a" style="left:385px;top:384px;width:9px;height:16px;background:linear-gradient(90deg,#fdfdfd,#dcdcdc);border:1px solid #7a7a7a;border-radius:3px"></div>
<div class="a" style="left:385px;top:438px;width:9px;height:16px;background:linear-gradient(90deg,#fdfdfd,#dcdcdc);border:1px solid #7a7a7a;border-radius:3px"></div>
<div class="a" style="left:387px;top:444px;width:5px;height:4px;border-top:1px solid #333;border-bottom:1px solid #333"></div>
<div class="a" style="left:199px;top:386px;width:13px;height:12px;background:#dfe3ea;border:1px solid #9aa0a8"></div>
<svg style="left:201px;top:387px" width="10" height="10" viewBox="0 0 10 10"><path d="M1.5 5 L4 8.5 L8.5 1" fill="none" stroke="#2a3f9a" stroke-width="1.6"/></svg>
<div class="a" style="left:197px;top:402px;width:185px;height:15px;background:linear-gradient(#fefefe,#dadada);border:1px solid #707070;border-radius:3px"></div>
<div class="t" style="left:197px;top:403px;width:185px;text-align:center;color:#111">Modifica...</div>
<div class="t" style="left:198px;top:438px;color:#8c8c8c">&lt;Per categoria&gt;</div>
<div class="t" style="left:198px;top:474px;color:#111">Battente</div>
<!-- properties footer -->
<div class="t" style="left:8px;top:969px;color:#0b5bd3;text-decoration:underline">Guida alle proprietà</div>
<div class="a" style="left:321px;top:966px;width:72px;height:21px;background:#f3f3f3;border:1px solid #c4c4c4;border-radius:2px"></div>
<div class="t" style="left:321px;top:969px;width:72px;text-align:center;color:#9a9a9a">Applica</div>


<!-- ===== CANVAS ===== -->
<div class="a" style="left:402px;top:174px;width:1096px;height:816px;background:#fff;border-top:2px solid #6a6a6a;border-left:2px solid #6a6a6a"></div>

<!-- BENCH -->
<svg style="left:404px;top:176px" width="1076" height="796" viewBox="404 176 1076 796">
<g fill="rgba(30,80,215,0.52)" stroke="#1f4fd6" stroke-width="1.1" stroke-linejoin="round">
<!-- backrest slats -->
<rect x="843" y="376" width="210" height="10"/>
<rect x="765" y="402" width="364" height="10"/>
<rect x="692" y="429" width="512" height="10"/>
<rect x="700" y="456" width="504" height="10"/>
<rect x="692" y="482" width="514" height="10"/>
<!-- posts -->
<rect x="827" y="388" width="16" height="110"/><rect x="843" y="388" width="3" height="110"/>
<rect x="939" y="344" width="16" height="154"/><rect x="955" y="344" width="3" height="154"/>
<rect x="1050" y="389" width="4" height="109"/><rect x="1054" y="389" width="13" height="109"/><rect x="1067" y="389" width="3" height="109"/>
<!-- crest rail -->
<path d="M660 415 L674 415.6 C685 417 690 421 706 422 L720 421 C728 419 735 417 740 415 C748 410 757 406 757 402 C757 397 748 395 747 389 C748 384 760 382 773 382 L791 383 C800 382 810 378 819 373 L844 372 L844 368 C846 355 870 338 929 332 L966 332.6 C1010 337 1045 352 1050 363.5 L1053 372 L1077 372 C1085 376 1090 381 1108 382.5 L1123 382 C1135 382 1150 384 1150 390 C1149 394 1141 395 1142 400 C1143 407 1155 412 1160 415 L1173 420 L1163 435 C1150 430 1135 420 1129 412 C1126 404 1120 402 1106 400 C1090 399 1075 393 1067 389 L1053 389 C1042 388 1036 383 1036 375 C1035 365 1020 355 997 350 C980 346 965 344.6 958 344.6 L939 344 C920 345 880 350 869 358 C862 364 860 370 860 375 C859 383 852 388 846 388.8 L827 388 C815 393 810 398 804 398 L778 400 C770 403 768 410 761 421 C755 427 745 430 740 432 C730 435 720 437 705 438 L680 438 C670 435 665 430 660 430 Z"/>
<!-- seat rail & stretcher -->
<rect x="672" y="498" width="514" height="17" fill="rgba(30,80,215,0.72)"/>
<rect x="672" y="618" width="514" height="18" fill="rgba(30,80,215,0.64)"/>
<!-- centre legs -->
<rect x="903" y="515" width="15" height="103"/><rect x="918" y="515" width="4" height="103"/>
<rect x="939" y="515" width="16" height="103"/><rect x="955" y="515" width="3" height="103"/>
<!-- leg bands -->
<path d="M640 435 C648 453 655 470 656.5 505 L663 642 L675.5 642 L676 505 C674 475 669 453 659 433 C655 425 650 420 646 418 Z"/>
<path d="M676 436 C682 446 688 462 692.6 497.6 L699 642 L711.6 642 L711 497.6 C709 479 704.6 453 698 440 C694 434 688 430 682 428 Z"/>
<path d="M1222 435 C1214 453 1207 470 1205.5 505 L1199 642 L1186.5 642 L1186 505 C1188 475 1193 453 1203 433 C1207 425 1212 420 1216 418 Z"/>
<path d="M1186 436 C1180 446 1174 462 1169.4 497.6 L1163 642 L1150.4 642 L1151 497.6 C1153 479 1157.4 453 1164 440 C1168 434 1174 430 1180 428 Z"/>
<!-- arms -->
<path d="M609 429 C609 420 614 416 622 415.5 L637 415.2 L644 417.5 L660 415.2 L674 415.6 L690 420 L692 430 L660 433 L640 435 L631 445.3 L619.4 445.3 C613 443 609 437 609 429 Z"/>
<path d="M1214 417 L1242 416 C1250 418 1253 424 1253 430 C1253 438 1249 444 1242 445.3 L1231 445 L1214 444 Z"/>
<ellipse cx="1188.5" cy="430" rx="25.5" ry="15.5"/>
<!-- arm bars -->
<path d="M621 423 L683 423 L687 426.5 L683 430 L621 430 Z"/>
<path d="M613 431 L650 431 L654 433 L650 435.5 L613 435.5 Z"/>
<path d="M1241 423 L1179 423 L1175 426.5 L1179 430 L1241 430 Z"/>
<path d="M1249 431 L1212 431 L1208 433 L1212 435.5 L1249 435.5 Z"/>
<path d="M660 439 L692 439 L696 442.5 L692 446 L660 446 L657 442.5 Z"/>
<path d="M663 451 L696 451 L700 454.5 L696 458 L663 458 L660 454.5 Z"/>
<path d="M666 466.5 L700 466.5 L704 470 L700 473.5 L666 473.5 L662.5 470 Z"/>
<path d="M668 482.3 L702 482.3 L706 485.8 L702 489.3 L668 489.3 L665 485.8 Z"/>
<path d="M1202 439 L1170 439 L1166 442.5 L1170 446 L1202 446 L1205 442.5 Z"/>
<path d="M1199 451 L1166 451 L1162 454.5 L1166 458 L1199 458 L1202 454.5 Z"/>
<path d="M1196 466.5 L1162 466.5 L1158 470 L1162 473.5 L1196 473.5 L1199.5 470 Z"/>
<path d="M1194 482.3 L1160 482.3 L1156 485.8 L1160 489.3 L1194 489.3 L1197 485.8 Z"/>
</g>
</svg>

<!-- canvas items -->
<div class="a" style="left:1480px;top:176px;width:17px;height:796px;background:#f0f0f0;border-left:1px solid #e6e6e6"></div>
<svg style="left:1484px;top:182px" width="9" height="6"><path d="M0.5 5 L4.5 0.5 L8.5 5Z" fill="#222"/></svg>
<svg style="left:1484px;top:962px" width="9" height="6"><path d="M0.5 0.5 L4.5 5 L8.5 0.5Z" fill="#222"/></svg>
<div class="a" style="left:1481px;top:566px;width:14px;height:16px;background:linear-gradient(90deg,#fafafa,#d5d5d5);border:1px solid #8a8a8a;border-radius:2px"></div>
<div class="a" style="left:404px;top:972px;width:1093px;height:17px;background:#eeeeee;border-top:1px solid #e2e2e2"></div>
<div class="a" style="left:649px;top:973px;width:831px;height:16px;background:#f2f2f2"></div>
<div class="t" style="left:431px;top:974px;color:#111;font-size:12px">1 : 10</div>
<svg style="left:483px;top:972px" width="165" height="16" viewBox="0 0 165 16"><rect x="1" y="1.5" width="15" height="12" fill="#e9e9e9" stroke="#333" stroke-width="1.1"/><path d="M1 4.5 H16 M1 10.5 H16" stroke="#333"/><rect x="5" y="6" width="3" height="3" fill="#555"/><rect x="11" y="6" width="3" height="3" fill="#999"/>
<path d="M23 6 L27 2 H38 V10 L34 14 H23Z M23 6 H34 V14 M34 6 L38 2" fill="#eaecef" stroke="#333" stroke-width="1.1"/>
<path d="M43 8 H47 M47 4 V13 H54 M47 4 H56 V6" fill="none" stroke="#1d5fae" stroke-width="1.6"/><path d="M49 7 L56 14 M56 7 L49 14" stroke="#e02020" stroke-width="2"/>
<path d="M63 8 H66 M66 4 V13 H72 M66 4 H74" fill="none" stroke="#1d5fae" stroke-width="1.6"/><ellipse cx="75" cy="8" rx="3" ry="4" fill="#bde0fa" stroke="#1d6fd0"/><path d="M74 12 V15" stroke="#333"/>
<path d="M84 8 L91 2 L98 7 V14 H84Z" fill="#eef0f3" stroke="#333" stroke-width="1.1"/><rect x="91" y="9" width="6" height="6" rx="1" fill="#1f8a6a"/><path d="M92 9 V7 Q94 5 96 7 V9" fill="none" stroke="#1f8a6a"/>
<path d="M104 7 Q106 11 110 9 Q114 5 118 8 Q120 12 114 12 Q110 10 106 6" fill="#c8e4f7" stroke="#333" stroke-width="1.1"/>
<path d="M125 2 V14 M141 2 V14 M125 4 H141" stroke="#333" stroke-width="1.1"/><path d="M125 10 H133" stroke="#333" stroke-dasharray="1.5 1.5"/><rect x="134" y="9" width="6" height="5" fill="#555"/>
<rect x="146" y="3" width="14" height="4" fill="#eee" stroke="#333"/><rect x="146" y="9" width="14" height="4" fill="#eee" stroke="#333"/><ellipse cx="159" cy="7" rx="3" ry="4" fill="#bde0fa" stroke="#1d6fd0"/></svg>
<svg style="left:654px;top:976px" width="6" height="9"><path d="M5.5 0.5 L0.5 4.5 L5.5 8.5Z" fill="#222"/></svg>
<div class="a" style="left:1056px;top:973px;width:15px;height:15px;background:linear-gradient(#fafafa,#d3d3d3);border:1px solid #8a8a8a;border-radius:2px"></div>
<svg style="left:1468px;top:976px" width="6" height="9"><path d="M0.5 0.5 L5.5 4.5 L0.5 8.5Z" fill="#222"/></svg>
<svg style="left:1486px;top:979px" width="8" height="8"><g fill="#a0a0a0"><rect x="6" y="0" width="1.5" height="1.5"/><rect x="3" y="3" width="1.5" height="1.5"/><rect x="6" y="3" width="1.5" height="1.5"/><rect x="0" y="6" width="1.5" height="1.5"/><rect x="3" y="6" width="1.5" height="1.5"/><rect x="6" y="6" width="1.5" height="1.5"/></g></svg>
<!-- view window controls -->
<div class="a" style="left:1428px;top:190px;width:12px;height:3px;background:#fff;border:1px solid #333"></div>
<svg style="left:1446px;top:184px" width="12" height="12" viewBox="0 0 12 12"><rect x="3.5" y="0.5" width="8" height="8" fill="#fff" stroke="#333"/><rect x="0.5" y="3.5" width="8" height="8" fill="#fff" stroke="#333"/><rect x="2.5" y="5.5" width="4" height="4" fill="none" stroke="#333"/></svg>
<svg style="left:1463px;top:184px" width="12" height="12" viewBox="0 0 12 12"><path d="M1.5 1.5 L10.5 10.5 M10.5 1.5 L1.5 10.5" stroke="#333" stroke-width="2.6"/><path d="M1.5 1.5 L10.5 10.5 M10.5 1.5 L1.5 10.5" stroke="#fff" stroke-width="1"/></svg>
<!-- view cube -->
<div class="a" style="left:1378px;top:287px;width:80px;height:10px;border-radius:50%;background:radial-gradient(ellipse at center,rgba(0,0,0,0.22),rgba(0,0,0,0) 70%)"></div>
<svg style="left:1386px;top:235px" width="62" height="60" viewBox="0 0 62 60"><defs><linearGradient id="cf" x1="0" y1="0" x2="0" y2="1"><stop offset="0" stop-color="#f2f2f2"/><stop offset="1" stop-color="#dedede"/></linearGradient></defs><path d="M1.5 2.5 H52.5 V55.5 H1.5 Z" fill="url(#cf)" stroke="#8c8c8c" stroke-width="1"/><path d="M52.5 1.5 L60 6 V51 L52.5 55.5 Z" fill="#e6e6e6" stroke="#8c8c8c" stroke-width="1"/><rect x="11" y="12" width="31" height="33" fill="#d9dadd" opacity="0.8"/></svg>
<div class="t" style="left:1393px;top:256px;font-size:13px;font-weight:bold;color:#8a8a8e;transform:scaleX(0.74);transform-origin:0 0">FRONTE</div>
<div class="t" style="left:1439px;top:257px;font-size:10px;font-weight:bold;color:#9a9a9a;transform:scaleX(0.6);transform-origin:0 0">DX</div>
<!-- nav bar -->
<div class="a" style="left:1444px;top:325px;width:34px;height:116px;background:#f4f4f4;border:2px solid #c8c8c8;border-radius:4px"></div>
<svg style="left:1466px;top:326px" width="10" height="10"><circle cx="5" cy="5" r="4" fill="#c4c4c4"/><path d="M3 3 L7 7 M7 3 L3 7" stroke="#fff" stroke-width="1.2"/></svg>
<svg style="left:1449px;top:346px" width="26" height="25" viewBox="0 0 26 25"><circle cx="11" cy="11" r="9.5" fill="#f2f2f2" stroke="#b8b8b8" stroke-width="1.3"/><circle cx="11" cy="11" r="5" fill="#fff" stroke="#b8b8b8" stroke-width="1.3"/><path d="M13 14 L16 11 H23 V18 L20 21 H13Z" fill="#9cc8ee" stroke="#5a8fc8"/></svg>
<svg style="left:1457px;top:374px" width="7" height="4"><path d="M0 0 H7 L3.5 3.5Z" fill="#999"/></svg>
<div class="a" style="left:1449px;top:382px;width:24px;height:1px;background:#d8d8d8"></div>
<svg style="left:1452px;top:389px" width="20" height="20" viewBox="0 0 20 20"><rect x="1" y="1" width="12" height="12" fill="#a6d08f" stroke="#7fae68"/><circle cx="12" cy="13" r="3.5" fill="#fff" stroke="#666" stroke-width="1.2"/><path d="M14.5 15.5 L18 19" stroke="#555" stroke-width="1.8"/></svg>
<svg style="left:1457px;top:416px" width="7" height="4"><path d="M0 0 H7 L3.5 3.5Z" fill="#999"/></svg>
<svg style="left:1466px;top:429px" width="10" height="10"><circle cx="5" cy="5" r="4" fill="#c4c4c4"/><path d="M3 5 H7" stroke="#fff" stroke-width="1.2"/></svg>

<!-- ===== PROJECT BROWSER ===== -->
<div class="a" style="left:1497px;top:174px;width:5px;height:816px;background:#eeeeee"></div>
<div class="a" style="left:1502px;top:174px;width:394px;height:18px;background:#c3d0dd"></div>
<div class="t" style="left:1506px;top:177px;color:#3c3c3c">Browser di progetto - Panchina (1).rfa</div>
<svg style="left:1881px;top:179px" width="10" height="10" viewBox="0 0 10 10"><path d="M1 1 L9 9 M9 1 L1 9" stroke="#111" stroke-width="1.6"/></svg>
<div class="a" style="left:1502px;top:192px;width:394px;height:798px;background:#fff;border-top:2px solid #6d6d6d;border-left:2px solid #6d6d6d;border-right:1px solid #a0a0a0"></div>
<!-- tree -->
<svg style="left:1504px;top:196px" width="180" height="162" viewBox="0 0 180 162"><g stroke="#a0a0a0" stroke-dasharray="1 1" stroke-width="1" fill="none"><path d="M8.5 13 V153 M8.5 9.5 H22 M8.5 99.5 H22 M8.5 117.5 H22 M8.5 135.5 H22 M8.5 153.5 H22 M28.5 16 V81 M28.5 27.5 H43 M28.5 45.5 H43 M28.5 63.5 H43 M28.5 81.5 H43"/></g>
<g fill="#fff" stroke="#7d8a99" stroke-width="1"><rect x="4.5" y="5.5" width="8" height="8"/><rect x="24.5" y="23.5" width="8" height="8"/><rect x="24.5" y="41.5" width="8" height="8"/><rect x="24.5" y="59.5" width="8" height="8"/><rect x="24.5" y="77.5" width="8" height="8"/><rect x="4.5" y="113.5" width="8" height="8"/><rect x="4.5" y="131.5" width="8" height="8"/></g>
<g stroke="#243a8a" stroke-width="1.2"><path d="M6 9.5 H11"/><path d="M26 27.5 H31 M28.5 25 V30 M26 45.5 H31 M28.5 43 V48 M26 63.5 H31 M28.5 61 V66 M26 81.5 H31 M28.5 79 V84 M6 117.5 H11 M8.5 115 V120 M6 135.5 H11 M8.5 133 V138"/></g>
<path d="M20 6 V2 H24 M32 2 H36 V6 M20 13 V17 H24 M32 17 H36 V13" fill="none" stroke="#222" stroke-width="1.2"/><path d="M23 7 L25 5 H32 V12 L30 14 H23 Z M23 7 H30 V14 M30 7 L32 5" fill="#f4f4f4" stroke="#333" stroke-width="1"/>
<rect x="20.5" y="92.5" width="15" height="13" fill="#fff" stroke="#333"/><path d="M31 92 L36 97" stroke="#333"/><rect x="22.5" y="97.5" width="5" height="6" fill="none" stroke="#666"/><rect x="28.5" y="99.5" width="4" height="4" fill="none" stroke="#666"/>
<path d="M20.5 109.5 H36.5 V124.5 H20.5 Z" fill="#fff" stroke="#333"/><path d="M22.5 110.5 V117.5 H27.5 V110.5 M29.5 117.5 V123 H35" fill="none" stroke="#333"/>
<path d="M24 127 H20.5 V142.5 H24 M33 127 H36.5 V142.5 H33" fill="none" stroke="#333"/><circle cx="27" cy="133" r="4" fill="#ddd" stroke="#333"/><rect x="27.5" y="133.5" width="6" height="6" fill="#eee" stroke="#333"/>
<g fill="none" stroke="#d9a400" stroke-width="2"><rect x="21" y="150" width="8" height="6" rx="3"/><rect x="27" y="150" width="8" height="6" rx="3"/></g>
</svg>
<div class="a" style="left:1543px;top:197px;width:67px;height:17px;background:#e1e1e1"></div>
<div class="t" style="left:1546px;top:198px;color:#111">Viste (tutto)</div>
<div class="t" style="left:1550px;top:216px;color:#111">Piante dei pavimenti</div>
<div class="t" style="left:1550px;top:234px;color:#111">Piante dei controsoffitti</div>
<div class="t" style="left:1550px;top:252px;color:#111">Viste 3D</div>
<div class="t" style="left:1550px;top:270px;color:#111">Prospetti (Prospetto 1)</div>
<div class="t" style="left:1546px;top:288px;color:#111">Tavole (tutto)</div>
<div class="t" style="left:1546px;top:306px;color:#111">Famiglie</div>
<div class="t" style="left:1546px;top:324px;color:#111">Gruppi</div>
<div class="t" style="left:1546px;top:342px;color:#111">Collegamenti Revit</div>

<!-- ===== TOOLTIP ===== -->
<div class="a" style="left:839px;top:132px;width:353px;height:97px;background:rgba(0,0,0,0.18);filter:blur(2px);border-radius:2px"></div>
<div class="a" style="left:836px;top:129px;width:353px;height:97px;background:linear-gradient(#ffffff,#e6e6f0);border:1px solid #767676;border-radius:2px"></div>
<div class="a" style="left:837px;top:196px;width:351px;height:1px;background:#c7c7cf;border-bottom:1px solid #fff"></div>
<div class="t" style="left:843px;top:138px;font-weight:bold;color:#4c4c4c;font-size:11.8px">Impostazioni visibilità</div>
<div class="t" style="left:843px;top:159px;color:#4c4c4c;font-size:11.85px">Controlla la visibilità e la visualizzazione grafica degli elementi di</div>
<div class="t" style="left:843px;top:174px;color:#4c4c4c;font-size:11.85px">ciascuna vista del progetto.</div>
<div class="t" style="left:843px;top:204px;font-weight:bold;color:#4c4c4c;font-size:11.8px">Premere F1 per ulteriori informazioni</div>

<!-- ===== STATUS BAR ===== -->
<div class="a" style="left:0;top:990px;width:1896px;height:28px;background:#d4d4d4;border-top:1px solid #9a9a9a"></div>
<div class="t" style="left:6px;top:997px;font-size:11.5px">Fare clic per selezionare, premere TAB per alternare, CTRL per aggiungere e MAIUSC per deselezionare.</div>

<svg style="left:1630px;top:996px" width="190" height="18" viewBox="0 0 190 18"><g fill="none" stroke="#d9a400" stroke-width="2.2"><rect x="2" y="3" width="7" height="5" rx="2.5"/><rect x="8" y="3" width="7" height="5" rx="2.5"/></g>
<g id="cur"><path d="M6 5 V16 L8.5 13.5 L10.5 17.5 L12 17 L10 13 H13.5Z" fill="#fff" stroke="#333" stroke-width="0.9"/></g>
<path d="M28 11 L36 4 V9 H42 M28 14 L36 7" fill="none" stroke="#1d6fd0" stroke-width="1.2"/><path d="M38 1 L44 7 M44 1 L38 7" stroke="#e02020" stroke-width="1.8"/><path d="M36 6 V17 L38.5 14.5 L40.5 18 L42 17.5 L40 14 H43.5Z" fill="#fff" stroke="#333" stroke-width="0.9"/>
<rect x="54" y="2" width="9" height="6" rx="1" fill="#f6a23a" stroke="#c0541a"/><path d="M54 8 H64 M58.5 8 V17" stroke="#c0541a" stroke-width="1.2"/><path d="M62 6 V17 L64.5 14.5 L66.5 18 L68 17.5 L66 14 H69.5Z" fill="#fff" stroke="#333" stroke-width="0.9"/>
<path d="M80 4 L86 2 V14 L80 16Z" fill="#9cc8ee" stroke="#1d6fd0"/><path d="M88 1 L94 7 M94 1 L88 7" stroke="#e02020" stroke-width="1.8"/><path d="M87 6 V17 L89.5 14.5 L91.5 18 L93 17.5 L91 14 H94.5Z" fill="#fff" stroke="#333" stroke-width="0.9"/>
<path d="M105 1 V9 M101 5 H109" stroke="#222" stroke-width="1.4"/><path d="M110 6 V17 L112.5 14.5 L114.5 18 L116 17.5 L114 14 H117.5Z" fill="#fff" stroke="#333" stroke-width="0.9"/>
<circle cx="138" cy="9" r="5.5" fill="none" stroke="#c9c9c9" stroke-width="2.2" stroke-dasharray="2 1.4"/>
<path d="M153 2 H170 V4 L164 10 V17 H159 V10 L153 4Z" fill="#d5d8dd" stroke="#333" stroke-width="1.1"/></svg>
<div class="t" style="left:1800px;top:997px;color:#111;font-size:12.5px">:40</div>
<svg style="left:1886px;top:1004px" width="8" height="8"><g fill="#a8a8a8"><rect x="6" y="0" width="1.5" height="1.5"/><rect x="3" y="3" width="1.5" height="1.5"/><rect x="6" y="3" width="1.5" height="1.5"/><rect x="0" y="6" width="1.5" height="1.5"/><rect x="3" y="6" width="1.5" height="1.5"/><rect x="6" y="6" width="1.5" height="1.5"/></g></svg>

<!-- ===== WORD STATUS ===== -->
<div class="a" style="left:0;top:1018px;width:1920px;height:22px;background:#2b579a"></div>
<div class="t" style="left:7px;top:1022px;color:#fff;font-size:10.6px">PAGINA 3 DI 3</div>
<div class="t" style="left:97px;top:1022px;color:#fff;font-size:10.4px">191 PAROLE</div>
<div class="t" style="left:208px;top:1022px;color:#fff;font-size:10.3px">ITALIANO (ITALIA)</div>
<svg style="left:178px;top:1021px" width="14" height="16" viewBox="0 0 14 16"><path d="M1 1 H5 L7 3 V14 L5 12 H1Z M7 3 L9 1 H13 V12 H9 L7 14" fill="none" stroke="#fff" stroke-width="1"/><path d="M9 4 L12 8 M12 4 L9 8" stroke="#fff" stroke-width="1.2"/></svg>
<svg style="left:1638px;top:1021px" width="16" height="15" viewBox="0 0 16 15"><path d="M1 1.5 H6 L8 3 L10 1.5 H15 V12.5 H10 L8 14 L6 12.5 H1Z M8 3 V14" fill="none" stroke="#fff" stroke-width="1.1"/><path d="M3 5 H6 M3 7.5 H6 M3 10 H6 M10 5 H13 M10 7.5 H13 M10 10 H13" stroke="#fff" stroke-width="0.9"/></svg>
<div class="a" style="left:1666px;top:1018px;width:38px;height:22px;background:#1f4e8e"></div>
<svg style="left:1677px;top:1021px" width="16" height="15" viewBox="0 0 16 15"><rect x="1" y="1" width="14" height="13" fill="none" stroke="#fff" stroke-width="1.1"/><path d="M3 4 H13 M3 6.5 H13 M3 9 H13 M3 11.5 H13" stroke="#fff" stroke-width="0.9"/></svg>
<svg style="left:1715px;top:1021px" width="16" height="16" viewBox="0 0 16 16"><path d="M1 1 H11 V7 M1 1 V12 H7" fill="none" stroke="#fff" stroke-width="1.1"/><path d="M3 4 H9 M3 6.5 H9 M3 9 H7" stroke="#fff" stroke-width="0.9"/><circle cx="11.5" cy="11.5" r="4" fill="#fff"/><path d="M9 11 Q11 9 12 11 Q13 13 14.5 12" stroke="#2b579a" fill="none" stroke-width="1"/></svg>
<div class="a" style="left:1747px;top:1028px;width:6px;height:2px;background:#fff"></div>
<div class="a" style="left:1757px;top:1028px;width:100px;height:1px;background:#fff"></div>
<div class="a" style="left:1807px;top:1025px;width:1px;height:7px;background:#fff"></div>
<div class="a" style="left:1812px;top:1023px;width:5px;height:12px;background:#fff"></div>
<div class="t" style="left:1883px;top:1022px;color:#fff;font-size:12px">164%</div>
<svg style="left:1860px;top:1023px" width="9" height="9"><path d="M4.5 0 V9 M0 4.5 H9" stroke="#fff" stroke-width="2"/></svg>

<!-- ===== TASKBAR ===== -->
<div class="a" style="left:0;top:1040px;width:1920px;height:40px;background:linear-gradient(90deg,#0b0e12 0%,#151a20 30%,#1c2126 55%,#10141a 100%)"></div>
<div class="a" style="left:0;top:1040px;width:1920px;height:1px;background:#3a4048"></div>
<!-- start orb -->
<div class="a" style="left:8px;top:1042px;width:38px;height:37px;border-radius:50%;background:radial-gradient(circle at 50% 35%,#6fb6e6 0%,#2a7fc0 45%,#0d4f8a 80%,#0a3258 100%);border:1px solid #34506c"></div>
<svg style="left:15px;top:1049px" width="24" height="23" viewBox="0 0 24 23"><path d="M2 4 Q6 2 11 4 L10 11 Q6 9 1 11Z" fill="#f0522a"/><path d="M12 4 Q17 6 22 3 L21 10 Q16 12 11 11Z" fill="#7cc242"/><path d="M1 12 Q6 10 10 12 L9 19 Q5 17 0 19Z" fill="#2da5e8"/><path d="M11 12 Q16 13 21 11 L20 18 Q15 20 10 19Z" fill="#fcc218"/></svg>
<!-- buttons -->
<div class="a" style="left:60px;top:1041px;width:58px;height:38px;border-radius:3px;background:linear-gradient(160deg,#5a5f66 0%,#2a2f35 35%,#1b1f24 100%);border:1px solid #4a4f56"></div>
<div class="a" style="left:122px;top:1041px;width:58px;height:38px;border-radius:3px;background:linear-gradient(160deg,#5a5f66 0%,#2a2f35 35%,#1b1f24 100%);border:1px solid #4a4f56"></div>
<div class="a" style="left:184px;top:1041px;width:58px;height:38px;border-radius:3px;background:linear-gradient(160deg,#5a5f66 0%,#2a2f35 35%,#1b1f24 100%);border:1px solid #4a4f56"></div>
<div class="a" style="left:246px;top:1041px;width:58px;height:38px;border-radius:3px;background:linear-gradient(160deg,#5a5f66 0%,#2a2f35 35%,#1b1f24 100%);border:1px solid #4a4f56"></div>
<div class="a" style="left:308px;top:1041px;width:58px;height:38px;border-radius:3px;background:linear-gradient(160deg,#5a5f66 0%,#2a2f35 35%,#1b1f24 100%);border:1px solid #4a4f56"></div>
<div class="a" style="left:370px;top:1041px;width:58px;height:38px;border-radius:3px;background:linear-gradient(160deg,#a0a4a8 0%,#6b7075 40%,#44494e 100%);border:1px solid #8a8e92"></div>
<div class="a" style="left:432px;top:1041px;width:58px;height:38px;border-radius:3px;background:linear-gradient(160deg,#5a5f66 0%,#2a2f35 35%,#1b1f24 100%);border:1px solid #4a4f56"></div>
<div class="a" style="left:494px;top:1041px;width:58px;height:38px;border-radius:3px;background:linear-gradient(160deg,#5a5f66 0%,#2a2f35 35%,#1b1f24 100%);border:1px solid #4a4f56"></div>
<!-- app icons -->
<svg style="left:73px;top:1045px" width="32" height="32" viewBox="0 0 32 32"><path d="M2 8 H12 L14 6 H28 V26 H2Z" fill="#f7d774" stroke="#c9a23a"/><rect x="5" y="4" width="8" height="3" fill="#fff"/><rect x="6" y="4.5" width="2" height="2" fill="#2a9a2a"/><rect x="12" y="6" width="8" height="3" fill="#fff"/><rect x="13" y="6.5" width="2" height="2" fill="#d02020"/><rect x="18" y="8" width="8" height="3" fill="#fff"/><path d="M8 30 V21 Q8 18 11 18 H21 Q24 18 24 21 V30 H20 V23 H12 V30Z" fill="#6cc0ee" stroke="#2a84c0"/></svg>
<svg style="left:135px;top:1045px" width="32" height="32" viewBox="0 0 32 32"><circle cx="16" cy="16" r="14" fill="#db4437"/><path d="M16 16 L28.1 23 A14 14 0 0 1 9 28.1Z" fill="#ffcd40"/><path d="M16 16 L9 28.1 A14 14 0 0 1 3.9 9 Z" fill="#0f9d58"/><path d="M16 16 L3.9 9 A14 14 0 0 1 28.1 9 L16 9Z" fill="#db4437"/><path d="M16 9 H28.1 A14 14 0 0 1 28.1 23Z" fill="#ffcd40"/><circle cx="16" cy="16" r="6.2" fill="#fff"/><circle cx="16" cy="16" r="5" fill="#4285f4"/></svg>
<svg style="left:197px;top:1046px" width="32" height="30" viewBox="0 0 32 30"><path d="M3 6 L15 3 L18 18 L6 21Z" fill="#8ed86a" stroke="#5aa83a"/><path d="M8 9 L20 7 L21 22 L9 24Z" fill="#aee0f8" stroke="#6aa8d0"/><path d="M12 12 L26 10 L28 25 L14 27Z" fill="#f8e35a" stroke="#c8b030"/></svg>
<svg style="left:259px;top:1045px" width="32" height="32" viewBox="0 0 32 32"><path d="M8 3 L27 6 L22 30 L3 27Z" fill="#eef6fa" stroke="#9ab"/><path d="M8 3 L18 5 L10 29 L3 27Z" fill="#3a9cc8"/><path d="M10 4 L25 6" stroke="#777" stroke-width="2" stroke-dasharray="1 1.5"/></svg>
<svg style="left:321px;top:1044px" width="32" height="34" viewBox="0 0 32 34"><path d="M16 1 L6 31 M16 1 L26 31 M4 26 H28" stroke="#e3962a" stroke-width="2.2"/><rect x="7" y="8" width="18" height="17" fill="#f8f8f8" stroke="#ccc"/><path d="M12 12 Q16 10 14 16 Q12 20 18 22" fill="none" stroke="#555" stroke-width="1.2"/><path d="M27 2 L19 30" stroke="#ddd" stroke-width="2"/></svg>
<div class="a" style="left:383px;top:1044px;width:32px;height:32px;background:#cfe1f3"></div>
<svg style="left:386px;top:1046px" width="26" height="29" viewBox="0 0 26 29"><defs><linearGradient id="rg2" x1="0" y1="0" x2="1" y2="1"><stop offset="0" stop-color="#1a5aa8"/><stop offset="1" stop-color="#45b0e8"/></linearGradient></defs><path d="M3 2 H13 Q22 2 22 10 Q22 15 17 17 L24 27 H17 L11 18 H9 V27 H3Z M9 7 V13 H13 Q16 13 16 10 Q16 7 13 7Z" fill="url(#rg2)"/></svg>
<svg style="left:445px;top:1045px" width="32" height="32" viewBox="0 0 32 32"><path d="M2 5 L18 2 V30 L2 27Z" fill="#2b579a"/><rect x="18" y="6" width="12" height="20" fill="#fff" stroke="#2b579a"/><path d="M20 10 H28 M20 13 H28 M20 16 H28 M20 19 H28 M20 22 H28" stroke="#2b579a" stroke-width="1.2"/><text x="4" y="21" font-size="11" font-weight="bold" fill="#fff" font-family="Liberation Sans">W</text></svg>
<svg style="left:507px;top:1044px" width="32" height="34" viewBox="0 0 32 34"><ellipse cx="14" cy="15" rx="11" ry="9" fill="#b8b8b8"/><ellipse cx="14" cy="11" rx="11" ry="9" fill="#f2f2f2" stroke="#e02424" stroke-width="1.5"/><path d="M8 4 L22 26 M20 4 L10 20" stroke="#777" stroke-width="1.5"/><circle cx="22" cy="28" r="3.5" fill="none" stroke="#2a8ad8" stroke-width="2"/><circle cx="28" cy="24" r="3.5" fill="none" stroke="#2a8ad8" stroke-width="2"/></svg>
<!-- tray -->
<svg style="left:1733px;top:1057px" width="9" height="6"><path d="M0.5 5.5 L4.5 0.5 L8.5 5.5Z" fill="#fff"/></svg>
<div class="a" style="left:1754px;top:1053px;width:16px;height:16px;background:#d9232a"></div>
<svg style="left:1756px;top:1055px" width="12" height="12" viewBox="0 0 12 12"><path d="M1 10 L6 2 L9 8 Q10 10 11 9" fill="none" stroke="#fff" stroke-width="1.8"/></svg>
<svg style="left:1778px;top:1053px" width="14" height="16" viewBox="0 0 14 16"><path d="M1 5 H4 L8 1 V15 L4 11 H1Z" fill="#eee"/><path d="M10 5 Q12 8 10 11 M11.5 3 Q14.5 8 11.5 13" fill="none" stroke="#eee" stroke-width="1.2"/></svg>
<svg style="left:1803px;top:1052px" width="16" height="18" viewBox="0 0 16 18"><path d="M1 1 V6 M5 1 V6 M1 4 H5 M3 6 V12 H14 V17 H3" fill="none" stroke="#ddd" stroke-width="1.3"/></svg>
<div class="t" style="left:1850px;top:1045px;color:#fff;font-size:12px">12:33</div>
<div class="t" style="left:1836px;top:1063px;color:#fff;font-size:12px">18/11/2018</div>
<div class="a" style="left:1906px;top:1041px;width:14px;height:39px;background:linear-gradient(160deg,#6a7078,#2a3038);border:1px solid #8a8e92"></div>
<svg style="left:1796px;top:1040px" width="124" height="40" viewBox="0 0 124 40"><g fill="none" stroke="#c8d41a" stroke-width="1.3" stroke-linecap="round"><path d="M20 18 Q14 16 12 21 Q11 26 16 25 Q20 23 20 18 Q19 28 16 33 Q10 38 6 36 Q4 33 12 31 Q20 30 24 28"/><path d="M22 24 Q24 18 26 18 Q27 20 29 19"/><path d="M34 19 Q29 18 28 23 Q28 26 31 24 Q34 21 34 19 L33 25 Q35 24 37 21"/><path d="M51 5 Q44 8 42 18 L37 38 M38 17 H47"/><path d="M44 24 Q46 20 47 18 L46 24 Q47 25 49 22"/><path d="M48 14 L48.5 13"/><path d="M56 19 Q51 18 50 23 Q50 26 54 24"/><path d="M64 19 Q59 18 58 23 Q58 26 61 24 Q64 21 64 19 L63 25 Q65 24 68 21"/></g><g fill="none" stroke="#fff" stroke-width="1.3" stroke-linecap="round"><path d="M72 13 Q76 8 79 12 Q79 17 70 26 Q76 24 83 25"/><path d="M90 18 Q84 16 83 22 Q82 27 87 25 Q91 21 92 14 Q93 8 95 4 L88 27"/><path d="M96 12 Q101 8 103 12 Q103 15 98 17 Q104 17 103 22 Q101 27 95 25"/><path d="M112 18 Q106 16 105 22 Q104 27 109 25 Q113 21 114 14 Q115 8 117 4 L110 27"/></g></svg>

</body></html>
